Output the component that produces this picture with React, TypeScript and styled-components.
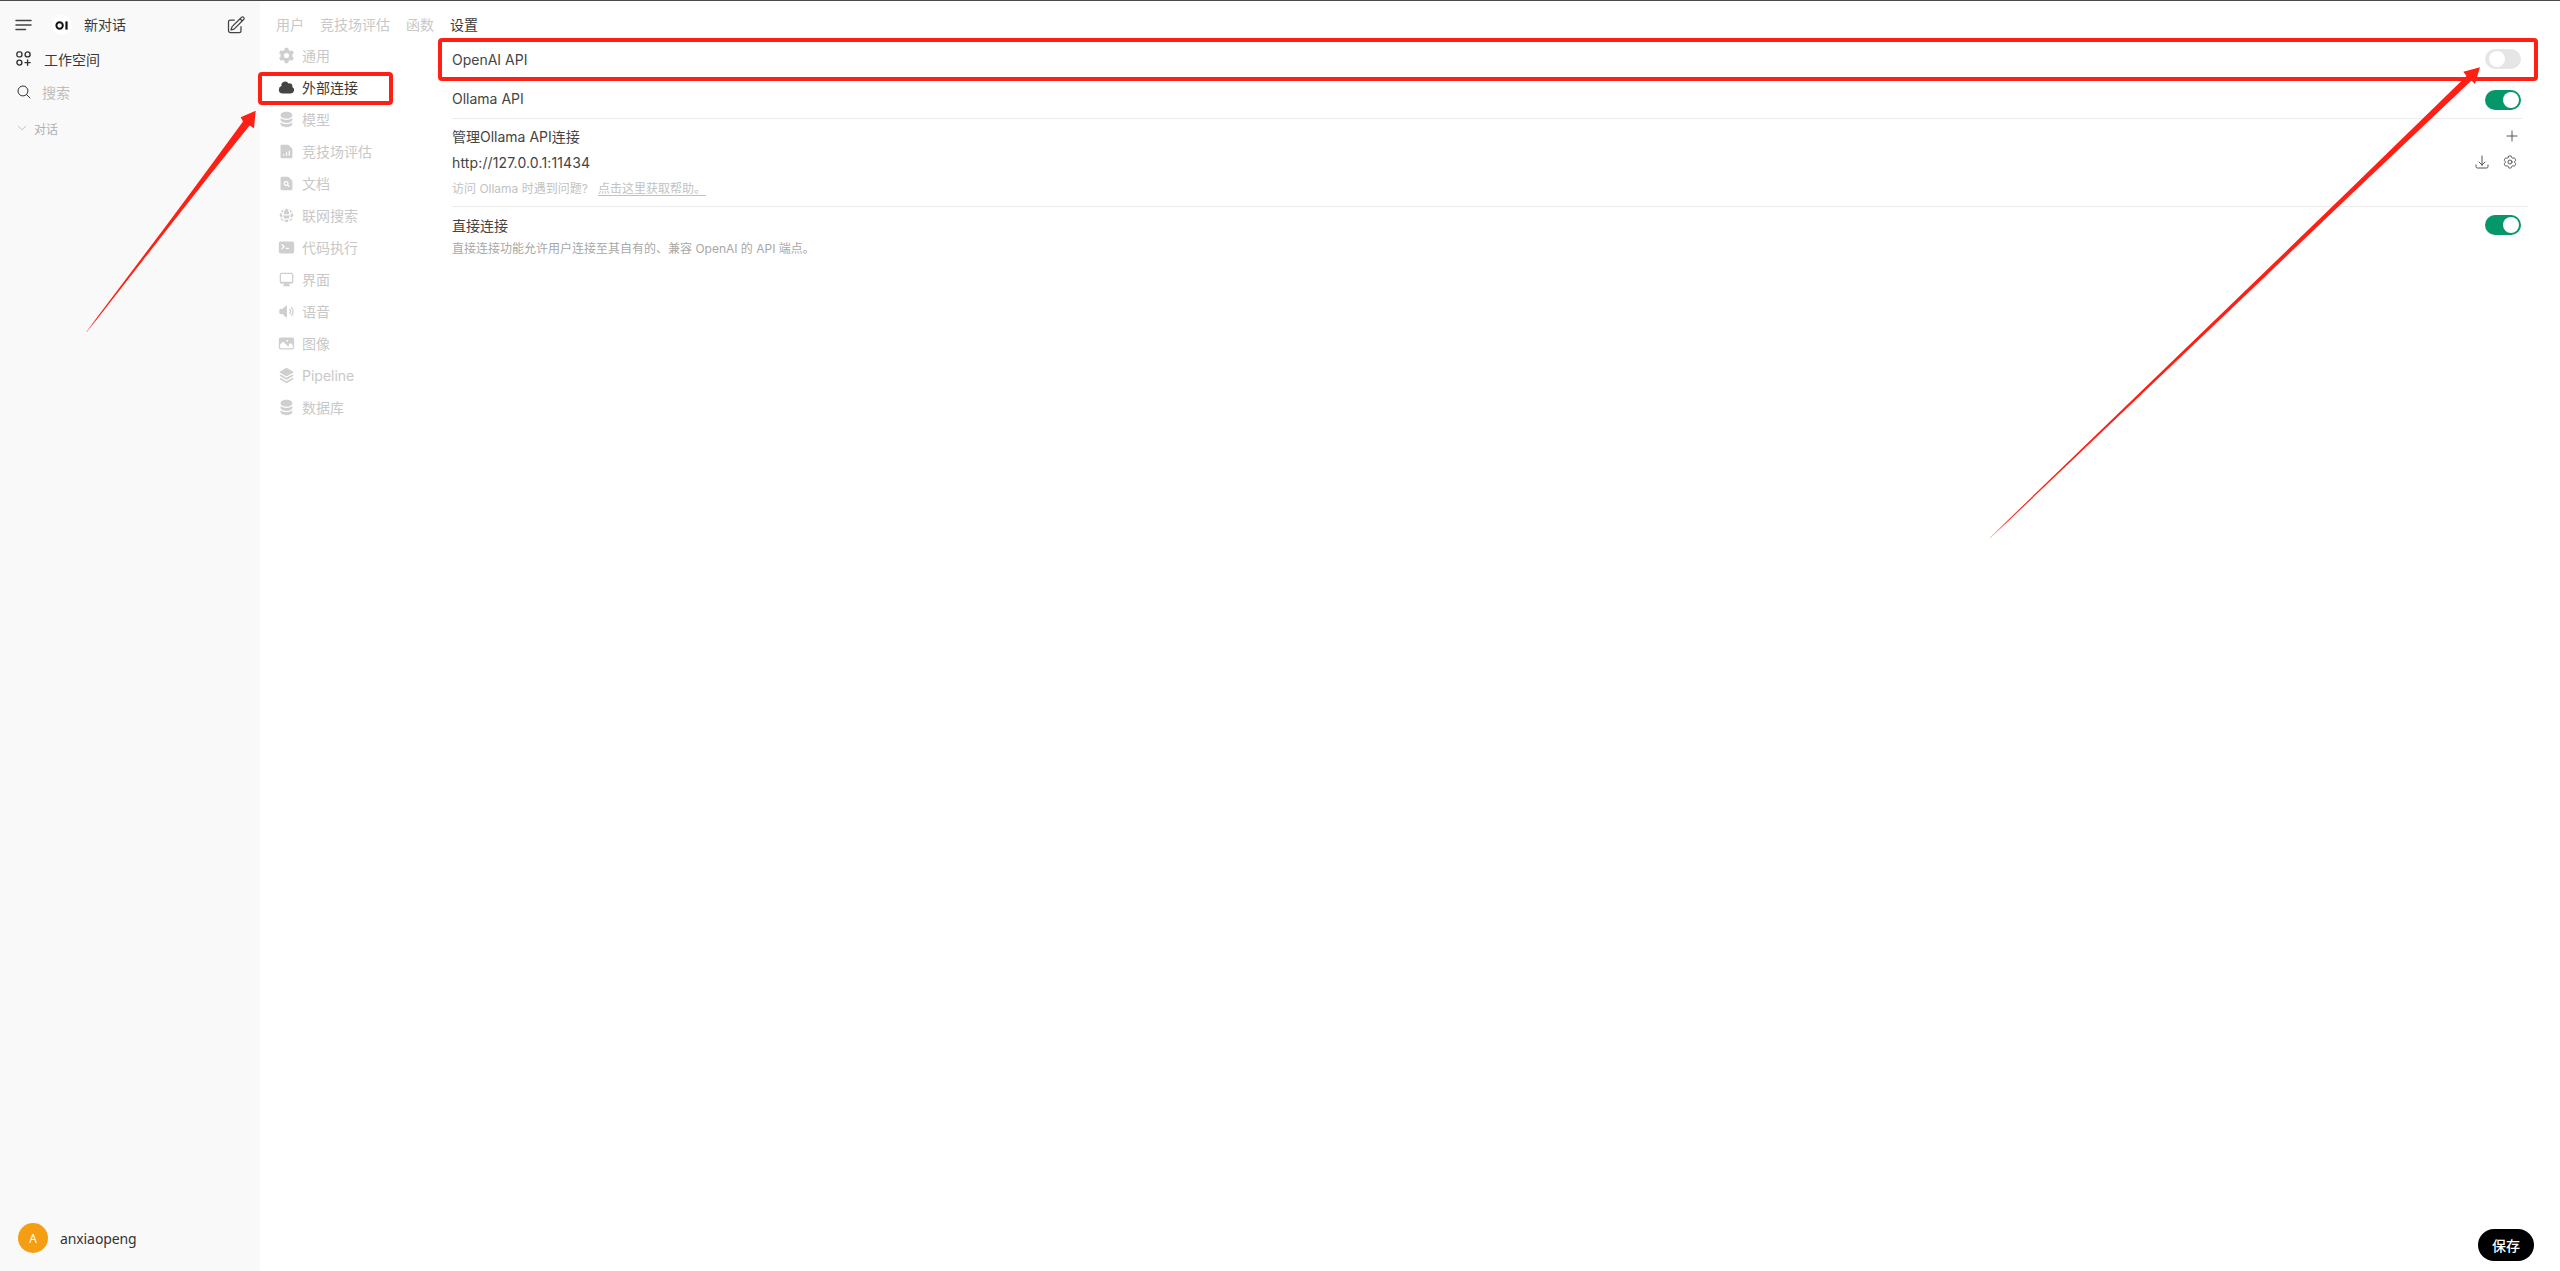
import React, { FC } from "react";
import styled, { createGlobalStyle } from "styled-components";
import {
  HiMiniCircleStack,
  HiMiniCloud,
  HiMiniCog6Tooth,
  HiMiniCommandLine,
  HiMiniComputerDesktop,
  HiMiniDocumentChartBar,
  HiMiniDocumentMagnifyingGlass,
  HiMiniGlobeAlt,
  HiMiniPhoto,
  HiMiniSpeakerWave,
  HiMiniSquare3Stack3D,
  HiOutlineArrowDownTray,
  HiOutlineChevronDown,
  HiOutlineCog6Tooth,
  HiOutlineMagnifyingGlass,
  HiOutlinePencilSquare,
  HiOutlinePlus,
} from "react-icons/hi2";

const GlobalStyle = createGlobalStyle`
  html, body {
    margin: 0;
    padding: 0;
    background: #fff;
    font-family: Inter, "Noto Sans CJK SC", sans-serif;
    font-size: 14px;
    color: #444;
  }
`;

const Page = styled.div`
  position: relative;
  display: flex;
  height: 1271px;
  box-sizing: border-box;
  border-top: 1px solid #4a4a4a;
  overflow: hidden;
`;

const Sidebar = styled.aside`
  width: 260px;
  flex: none;
  display: flex;
  flex-direction: column;
  background: #f9f9f9;
`;

const SideHeader = styled.div`
  display: flex;
  align-items: center;
  height: 34px;
  margin-top: 7px;
  padding: 0 14px 0 15px;
  color: #3a3a3a;
`;

const LogoWrap = styled.span`
  width: 20px;
  height: 20px;
  margin-left: 20px;
  margin-right: 12px;
  border-radius: 50%;
  background: #fff;
  display: flex;
  align-items: center;
  justify-content: center;
`;

const NewChat = styled.span`
  flex: 1;
  line-height: 20px;
`;

const SideRow = styled.div<{ $muted?: boolean }>`
  display: flex;
  align-items: center;
  height: 33px;
  padding-left: 16px;
  gap: ${(p) => (p.$muted ? "10px" : "13px")};
  color: ${(p) => (p.$muted ? "#bdbdbd" : "#3a3a3a")};
  svg {
    color: #333;
    flex: none;
  }
`;

const ChatGroup = styled.div`
  display: flex;
  align-items: center;
  gap: 6px;
  height: 20px;
  margin-top: 10px;
  padding-left: 16px;
  font-size: 12px;
  color: #b0b0b0;
`;

const UserRow = styled.div`
  margin-top: auto;
  display: flex;
  align-items: center;
  gap: 12px;
  height: 30px;
  padding: 0 18px;
  margin-bottom: 18px;
  font-size: 14px;
  font-weight: 400;
  font-family: "Noto Sans", Inter, sans-serif;
  letter-spacing: -0.1px;
  color: #333;
`;

const Avatar = styled.span`
  width: 30px;
  height: 30px;
  border-radius: 50%;
  background: #f59e14;
  color: #fff;
  font-size: 12px;
  font-weight: 400;
  display: flex;
  align-items: center;
  justify-content: center;
`;

const Main = styled.main`
  flex: 1;
  min-width: 0;
  display: flex;
  flex-direction: column;
`;

const Tabs = styled.nav`
  display: flex;
  gap: 16px;
  height: 20px;
  margin-top: 14px;
  padding-left: 16px;
  line-height: 20px;
`;

const Tab = styled.span<{ $active?: boolean }>`
  color: ${(p) => (p.$active ? "#3a3a3a" : "#c8c8c8")};
`;

const Body = styled.div`
  flex: 1;
  display: flex;
  margin-top: 4px;
  min-height: 0;
`;

const SettingsNav = styled.ul`
  list-style: none;
  width: 192px;
  flex: none;
  margin: 0;
  padding: 0 0 0 18px;
  box-sizing: border-box;
`;

const NavItem = styled.li<{ $active?: boolean }>`
  display: flex;
  align-items: center;
  gap: 7px;
  height: 32px;
  color: ${(p) => (p.$active ? "#3a3a3a" : "#c8c8c8")};
  svg {
    flex: none;
    color: ${(p) => (p.$active ? "#444" : "#cfcfcf")};
  }
`;

const Panel = styled.section`
  width: 2070px;
  flex: none;
  margin-top: 1px;
`;

const ToggleRow = styled.div`
  display: flex;
  align-items: center;
  justify-content: space-between;
  height: 38px;
  padding-right: 1px;
`;

const OllamaRow = styled(ToggleRow)`
  margin: 1px 0;
`;

const Divider = styled.hr<{ $wide?: boolean }>`
  border: 0;
  height: 1px;
  background: #ececec;
  margin: 0;
  width: ${(p) => (p.$wide ? "2076px" : "2070px")};
`;

const Toggle = styled.span<{ $on?: boolean; $drop?: boolean }>`
  width: 36px;
  height: 20px;
  box-sizing: border-box;
  border-radius: 10px;
  padding: 2px;
  display: flex;
  justify-content: ${(p) => (p.$on ? "flex-end" : "flex-start")};
  background: ${(p) => (p.$on ? "#059669" : "#e5e5e5")};
  border: ${(p) => (p.$on ? "0" : "1px solid #e8e8e8")};
  margin-top: ${(p) => (p.$drop ? "4px" : "0")};
  &::after {
    content: "";
    width: 16px;
    height: 16px;
    border-radius: 50%;
    background: #fff;
    margin: ${(p) => (p.$on ? "0" : "0 0 0 1px")};
    align-self: center;
  }
`;

const ManageHead = styled.div`
  display: flex;
  align-items: center;
  justify-content: space-between;
  height: 20px;
  margin-top: 7px;
  padding-right: 2px;
  svg {
    color: #555;
  }
`;

const UrlRow = styled.div`
  display: flex;
  align-items: center;
  justify-content: space-between;
  height: 20px;
  margin-top: 6px;
  letter-spacing: 0.14px;
`;

const UrlActions = styled.div`
  display: flex;
  gap: 12px;
  padding-right: 4px;
  svg {
    color: #555;
  }
`;

const Hint = styled.div`
  font-size: 12px;
  line-height: 16px;
  margin-top: 9px;
  margin-bottom: 9px;
  color: #c2c2c2;
  a {
    margin-left: 10px;
    color: #c2c2c2;
    text-decoration: underline;
    text-underline-offset: 2px;
  }
`;

const DirectHead = styled.div`
  display: flex;
  align-items: center;
  justify-content: space-between;
  height: 20px;
  margin-top: 8px;
  padding-right: 1px;
`;

const Description = styled.div`
  font-size: 12px;
  line-height: 16px;
  margin-top: 6px;
  color: #a8a8a8;
`;

const Footer = styled.div`
  display: flex;
  justify-content: flex-end;
  padding: 0 26px 10px 0;
`;

const SaveButton = styled.button`
  width: 56px;
  height: 32px;
  border: 0;
  border-radius: 16px;
  background: #000;
  color: #fff;
  font: 500 14px Inter, "Noto Sans CJK SC", sans-serif;
  padding: 0;
`;

const Highlight = styled.div<{ $x: number; $y: number; $w: number; $h: number }>`
  position: absolute;
  left: ${(p) => p.$x}px;
  top: ${(p) => p.$y}px;
  width: ${(p) => p.$w}px;
  height: ${(p) => p.$h}px;
  box-sizing: border-box;
  border: 4px solid #ff2015;
  border-radius: 4px;
  pointer-events: none;
`;

const ArrowLayer = styled.svg`
  position: absolute;
  left: 0;
  top: -1px;
  width: 2560px;
  height: 1271px;
  pointer-events: none;
`;

const MenuIcon = () => (
  <svg width="17" height="12" viewBox="0 0 17 12" fill="none" stroke="#444" strokeWidth="1.5" strokeLinecap="round">
    <path d="M1 1.5h15M1 6h15M1 10.5h9.5" />
  </svg>
);

const OiLogo = () => (
  <svg width="14" height="9" viewBox="0 0 14 9">
    <circle cx="4.6" cy="4.5" r="3.2" fill="none" stroke="#111" strokeWidth="2" />
    <rect x="10.4" y="0.4" width="2.2" height="8.2" fill="#111" />
  </svg>
);

const WorkspaceIcon = () => (
  <svg width="15" height="15" viewBox="0 0 15 15" fill="none" stroke="#333" strokeWidth="1.4" strokeLinecap="round">
    <rect x="0.9" y="0.9" width="5" height="5" rx="1.8" />
    <rect x="9.1" y="0.9" width="5" height="5" rx="2.5" />
    <rect x="0.9" y="9.1" width="5" height="5" rx="2.5" />
    <path d="M11.6 9v5.2M9 11.6h5.2" />
  </svg>
);

const navItems = [
  { label: "通用", icon: HiMiniCog6Tooth },
  { label: "外部连接", icon: HiMiniCloud, active: true },
  { label: "模型", icon: HiMiniCircleStack },
  { label: "竞技场评估", icon: HiMiniDocumentChartBar },
  { label: "文档", icon: HiMiniDocumentMagnifyingGlass },
  { label: "联网搜索", icon: HiMiniGlobeAlt },
  { label: "代码执行", icon: HiMiniCommandLine },
  { label: "界面", icon: HiMiniComputerDesktop },
  { label: "语音", icon: HiMiniSpeakerWave },
  { label: "图像", icon: HiMiniPhoto },
  { label: "Pipeline", icon: HiMiniSquare3Stack3D },
  { label: "数据库", icon: HiMiniCircleStack },
];

const tabs = ["用户", "竞技场评估", "函数"];

const App: FC = () => (
  <>
    <GlobalStyle />
    <Page>
      <Sidebar>
        <SideHeader>
          <MenuIcon />
          <LogoWrap>
            <OiLogo />
          </LogoWrap>
          <NewChat>新对话</NewChat>
          <HiOutlinePencilSquare size={20} color="#444" />
        </SideHeader>
        <SideRow>
          <WorkspaceIcon />
          工作空间
        </SideRow>
        <SideRow $muted>
          <HiOutlineMagnifyingGlass size={16} />
          搜索
        </SideRow>
        <ChatGroup>
          <HiOutlineChevronDown size={12} />
          对话
        </ChatGroup>
        <UserRow>
          <Avatar>A</Avatar>
          anxiaopeng
        </UserRow>
      </Sidebar>
      <Main>
        <Tabs>
          {tabs.map((t) => (
            <Tab key={t}>{t}</Tab>
          ))}
          <Tab $active>设置</Tab>
        </Tabs>
        <Body>
          <SettingsNav>
            {navItems.map(({ label, icon: Icon, active }) => (
              <NavItem key={label} $active={active}>
                <Icon size={17} />
                {label}
              </NavItem>
            ))}
          </SettingsNav>
          <Panel>
            <ToggleRow>
              OpenAI API
              <Toggle />
            </ToggleRow>
            <OllamaRow>
              Ollama API
              <Toggle $on $drop />
            </OllamaRow>
            <Divider />
            <ManageHead>
              管理Ollama API连接
              <HiOutlinePlus size={16} />
            </ManageHead>
            <UrlRow>
              http://127.0.0.1:11434
              <UrlActions>
                <HiOutlineArrowDownTray size={16} />
                <HiOutlineCog6Tooth size={16} />
              </UrlActions>
            </UrlRow>
            <Hint>
              访问 Ollama 时遇到问题?<a>点击这里获取帮助。</a>
            </Hint>
            <Divider $wide />
            <DirectHead>
              直接连接
              <Toggle $on />
            </DirectHead>
            <Description>直接连接功能允许用户连接至其自有的、兼容 OpenAI 的 API 端点。</Description>
          </Panel>
        </Body>
        <Footer>
          <SaveButton>保存</SaveButton>
        </Footer>
      </Main>
      <Highlight $x={258} $y={71} $w={135} $h={33} />
      <Highlight $x={438} $y={37} $w={2100} $h={43} />
      <ArrowLayer viewBox="0 0 2560 1271">
        <defs>
          <linearGradient id="fadeLeft" gradientUnits="userSpaceOnUse" x1="86" y1="333" x2="96" y2="320">
            <stop offset="0" stopColor="#ff2015" stopOpacity="0.35" />
            <stop offset="1" stopColor="#ff2015" />
          </linearGradient>
          <linearGradient id="fadeRight" gradientUnits="userSpaceOnUse" x1="1990" y1="538" x2="2010" y2="519">
            <stop offset="0" stopColor="#ff2015" stopOpacity="0.3" />
            <stop offset="1" stopColor="#ff2015" />
          </linearGradient>
        </defs>
        <polygon
          fill="url(#fadeLeft)"
          points="86.2,331.8 165.2,226.9 204.5,174.1 243,121.5 240.7,117.3 255.7,110.7 254,128.3 249.6,125.6 208.3,177.1 167.6,228.7 86.8,332.3"
        />
        <polygon
          fill="url(#fadeRight)"
          points="1989.7,537.7 2228.4,307 2347.8,191.6 2466.5,76 2463.3,71.7 2480,67.3 2475,84 2471.5,80.6 2350.8,194.8 2230.6,309.4 1990.3,538.3"
        />
      </ArrowLayer>
    </Page>
  </>
);

export default App;
